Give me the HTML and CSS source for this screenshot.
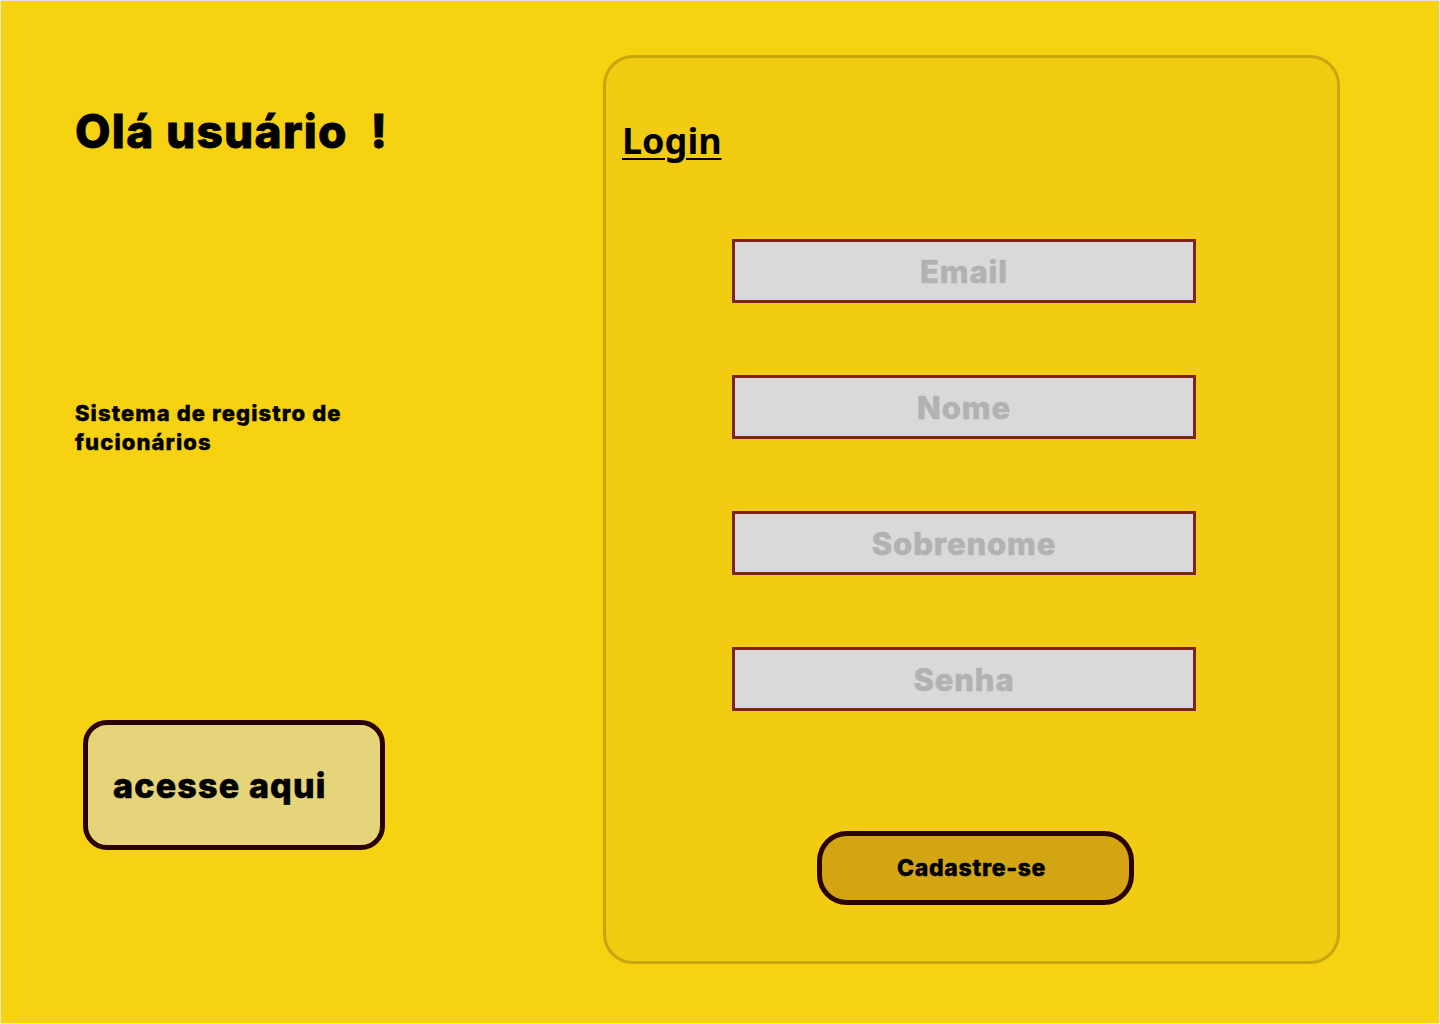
FILE: index.html
```html
<!DOCTYPE html>
<html lang="pt-BR">
<head>
<meta charset="utf-8">
<title>Login</title>
<link rel="stylesheet" href="styles.css">
</head>
<body>
<div class="page">
  <section class="left">
    <h1 class="title">Olá usuário &nbsp;!</h1>
    <p class="subtitle">Sistema de registro de<br>fucionários</p>
    <button class="access" type="button">acesse aqui</button>
  </section>
  <section class="panel">
    <h2 class="login">Login</h2>
    <form class="form">
      <div class="field"><span>Email</span></div>
      <div class="field"><span>Nome</span></div>
      <div class="field"><span>Sobrenome</span></div>
      <div class="field"><span>Senha</span></div>
      <button class="signup" type="button">Cadastre-se</button>
    </form>
  </section>
</div>
</body>
</html>
```

FILE: styles.css
```css
html, body {
  margin: 0;
  padding: 0;
}
body {
  font-family: Inter, "Liberation Sans", sans-serif;
  background: #F6D211;
}
.page {
  width: 1440px;
  height: 1024px;
  box-sizing: border-box;
  border: 1px solid #e4e4e4;
  background: #F6D211;
  display: flex;
  padding-top: 54px;
}
.left {
  width: 602px;
  box-sizing: border-box;
  padding-left: 74px;
  display: flex;
  flex-direction: column;
  align-items: flex-start;
}
.title {
  margin: 48px 0 0 0;
  font-size: 46px;
  font-weight: 800;
  line-height: 56px;
  letter-spacing: 1.3px;
  -webkit-text-stroke: 0.8px #000;
  color: #000;
}
.subtitle {
  margin: 240px 0 0 0;
  font-size: 22px;
  font-weight: 800;
  line-height: 29px;
  letter-spacing: 1.1px;
  -webkit-text-stroke: 0.4px #000;
  color: #000;
}
.access {
  margin: 263px 0 0 8px;
  width: 302px;
  height: 130px;
  box-sizing: border-box;
  border: 5px solid #2A0000;
  border-radius: 24px;
  background: #E6D47A;
  font-family: Inter, "Liberation Sans", sans-serif;
  font-size: 34px;
  font-weight: 800;
  letter-spacing: 1.2px;
  -webkit-text-stroke: 0.6px #000;
  color: #000;
  text-align: left;
  padding: 0 0 0 25px;
  cursor: pointer;
}
.panel {
  width: 737px;
  height: 909px;
  box-sizing: border-box;
  border: 3px solid #C8A60F;
  border-radius: 30px;
  background: #F2CB13;
  padding: 0 0 0 16px;
}
.login {
  margin: 59px 0 0 0;
  font-family: "Noto Sans", "Open Sans", sans-serif;
  font-size: 36px;
  font-weight: 700;
  line-height: 48px;
  color: #000;
  text-decoration: underline;
  text-decoration-thickness: 2px;
  text-underline-offset: 4px;
  display: inline-block;
}
.form {
  margin: 74px 0 0 110px;
  display: flex;
  flex-direction: column;
  align-items: flex-start;
}
.field {
  width: 464px;
  height: 64px;
  box-sizing: border-box;
  border: 3px solid #7E2222;
  background: #D9D9D9;
  display: flex;
  align-items: center;
  justify-content: center;
  margin-bottom: 72px;
}
.field span {
  font-size: 31px;
  font-weight: 800;
  letter-spacing: 0.9px;
  -webkit-text-stroke: 0.5px #B2B2B2;
  color: #B2B2B2;
}
.signup {
  margin: 48px 0 0 85px;
  width: 317px;
  height: 74px;
  box-sizing: border-box;
  border: 5px solid #2A0000;
  border-radius: 30px;
  background: #D4A512;
  font-family: Inter, "Liberation Sans", sans-serif;
  font-size: 23px;
  font-weight: 800;
  letter-spacing: 0.7px;
  -webkit-text-stroke: 0.4px #000;
  color: #000;
  cursor: pointer;
  padding: 0 8px 0 0;
}
```
